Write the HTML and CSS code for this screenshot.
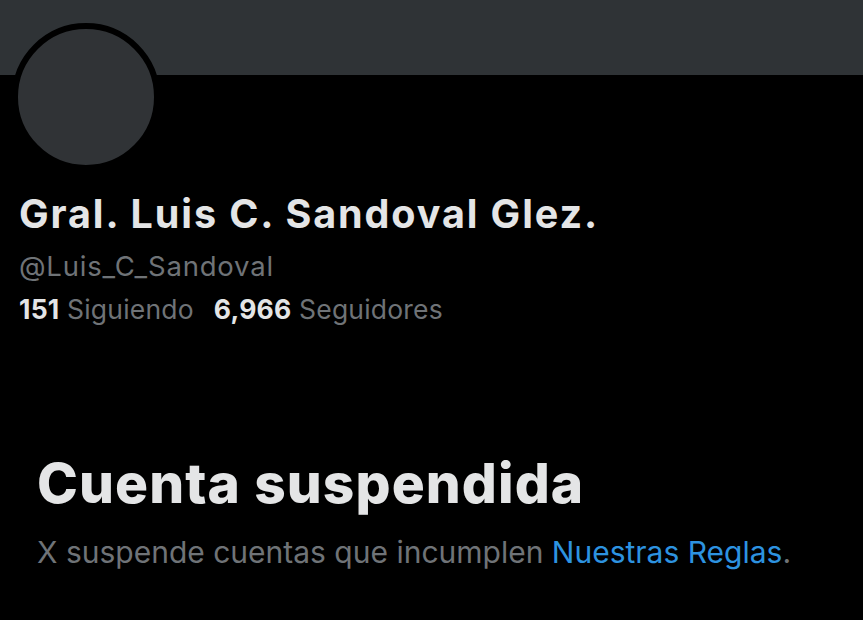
FILE: index.html
```html
<!DOCTYPE html>
<html lang="es">
<head>
<meta charset="utf-8">
<title>Cuenta suspendida</title>
<link rel="stylesheet" href="styles.css">
</head>
<body>
<div class="page">
  <div class="banner"></div>
  <div class="profile">
    <div class="avatar"></div>
    <h1 class="name">Gral. Luis C. Sandoval Glez.</h1>
    <div class="handle">@Luis_C_Sandoval</div>
    <div class="stats">
      <span class="stat"><b>151</b> Siguiendo</span>
      <span class="stat"><b>6,966</b> Seguidores</span>
    </div>
  </div>
  <div class="suspended">
    <h2 class="title">Cuenta suspendida</h2>
    <p class="desc">X suspende cuentas que incumplen <a class="link" href="#">Nuestras Reglas</a>.</p>
  </div>
</div>
</body>
</html>
```
FILE: styles.css
```css
html, body {
  margin: 0;
  padding: 0;
  background: #000;
}
.page {
  width: 863px;
  height: 620px;
  overflow: hidden;
  background: #000;
  font-family: Inter, "Liberation Sans", sans-serif;
}
.banner {
  height: 75px;
  background: #2f3336;
}
.profile {
  padding-left: 19px;
}
.avatar {
  width: 136px;
  height: 136px;
  border: 6px solid #000;
  border-radius: 50%;
  background: #303336;
  margin-top: -52px;
  margin-left: -7px;
}
.name {
  margin: 19px 0 0;
  font-size: 39.5px;
  line-height: 48px;
  font-weight: 700;
  color: #e4e5e6;
  letter-spacing: 1.9px;
}
.handle {
  margin-top: 11px;
  font-size: 27.5px;
  line-height: 34px;
  color: #6f7377;
  letter-spacing: 0.8px;
}
.stats {
  display: flex;
  gap: 20px;
  margin-top: 10px;
  font-size: 26.5px;
  line-height: 32px;
  color: #6f7377;
  letter-spacing: 0.2px;
}
.stat b {
  color: #e4e5e6;
  font-weight: 700;
}
.suspended {
  padding-left: 37px;
  margin-top: 126px;
}
.title {
  margin: 0;
  font-size: 55px;
  line-height: 64px;
  font-weight: 800;
  color: #e4e5e6;
  letter-spacing: 1.1px;
}
.desc {
  margin: 19px 0 0;
  font-size: 30px;
  line-height: 36px;
  color: #6f7377;
}
.link {
  color: #2d93e0;
  text-decoration: none;
}
```
